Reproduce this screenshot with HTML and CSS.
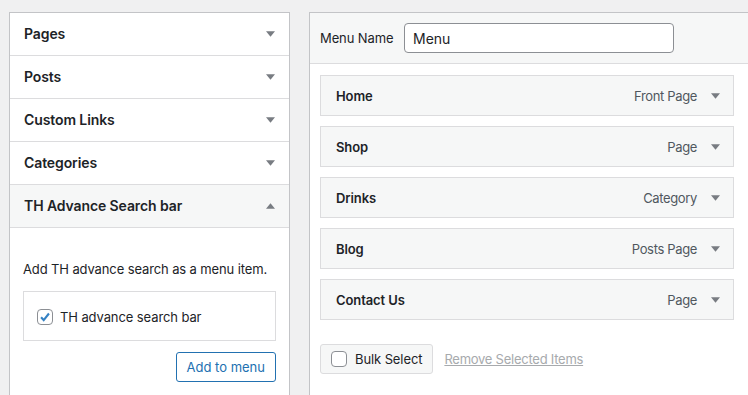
FILE: index.html
```html
<!DOCTYPE html>
<html lang="en">
<head>
    <meta charset="UTF-8">
    <title>Menus</title>
    <link rel="stylesheet" href="styles.css">
</head>
<body>
    <div class="wrap">
        <div class="sidebar">
            <div class="section">
                <h3>Pages</h3>
                <svg class="arrow" viewBox="0 0 10 6"><path d="M0 0h10L5 6z"/></svg>
            </div>
            <div class="section">
                <h3>Posts</h3>
                <svg class="arrow" viewBox="0 0 10 6"><path d="M0 0h10L5 6z"/></svg>
            </div>
            <div class="section">
                <h3>Custom Links</h3>
                <svg class="arrow" viewBox="0 0 10 6"><path d="M0 0h10L5 6z"/></svg>
            </div>
            <div class="section">
                <h3>Categories</h3>
                <svg class="arrow" viewBox="0 0 10 6"><path d="M0 0h10L5 6z"/></svg>
            </div>
            <div class="section open">
                <h3>TH Advance Search bar</h3>
                <svg class="arrow" viewBox="0 0 10 6"><path d="M0 6h10L5 0z"/></svg>
            </div>
            <div class="section-body">
                <p class="hint">Add TH advance search as a menu item.</p>
                <div class="checklist">
                    <label class="check-row">
                        <span class="checkbox checked">
                            <svg viewBox="0 0 16 16"><path d="M3.5 8.3l3 3.2 6-7.5" /></svg>
                        </span>
                        TH advance search bar
                    </label>
                </div>
                <div class="actions">
                    <button class="btn-outline">Add to menu</button>
                </div>
            </div>
        </div>

        <div class="menu-panel">
            <div class="menu-header">
                <label class="menu-label">Menu Name</label>
                <input class="menu-input" type="text" value="Menu">
            </div>
            <div class="menu-body">
                <ul class="menu-items">
                    <li class="menu-item">
                        <span class="item-title">Home</span>
                        <span class="item-type">Front Page</span>
                        <svg class="arrow" viewBox="0 0 10 6"><path d="M0 0h10L5 6z"/></svg>
                    </li>
                    <li class="menu-item">
                        <span class="item-title">Shop</span>
                        <span class="item-type">Page</span>
                        <svg class="arrow" viewBox="0 0 10 6"><path d="M0 0h10L5 6z"/></svg>
                    </li>
                    <li class="menu-item">
                        <span class="item-title">Drinks</span>
                        <span class="item-type">Category</span>
                        <svg class="arrow" viewBox="0 0 10 6"><path d="M0 0h10L5 6z"/></svg>
                    </li>
                    <li class="menu-item">
                        <span class="item-title">Blog</span>
                        <span class="item-type">Posts Page</span>
                        <svg class="arrow" viewBox="0 0 10 6"><path d="M0 0h10L5 6z"/></svg>
                    </li>
                    <li class="menu-item">
                        <span class="item-title">Contact Us</span>
                        <span class="item-type">Page</span>
                        <svg class="arrow" viewBox="0 0 10 6"><path d="M0 0h10L5 6z"/></svg>
                    </li>
                </ul>
                <div class="bulk-row">
                    <label class="bulk-btn">
                        <span class="checkbox"></span>
                        Bulk Select
                    </label>
                    <a class="remove-link">Remove Selected Items</a>
                </div>
            </div>
        </div>
    </div>
</body>
</html>
```
FILE: styles.css
```css
:root {
    --text: #1d2327;
    --muted: #50575e;
    --border: #c3c4c7;
    --line: #dcdcde;
    --bg: #f0f0f1;
    --panel-alt: #f6f7f7;
    --blue: #2271b1;
}

* {
    box-sizing: border-box;
    margin: 0;
    padding: 0;
}

body {
    font-family: Inter, "Noto Sans", sans-serif;
    font-size: 13px;
    color: var(--text);
    background: var(--bg);
    height: 395px;
    overflow: hidden;
}

.wrap {
    display: flex;
    align-items: flex-start;
    gap: 19px;
    padding: 12px 0 0 9px;
}

/* left accordion */
.sidebar {
    flex: 0 0 281px;
    height: 400px;
    background: #fff;
    border: 1px solid var(--border);
    border-bottom: none;
}

.section {
    display: flex;
    align-items: center;
    justify-content: space-between;
    height: 43px;
    padding: 0 14px 1px 14px;
    border-bottom: 1px solid var(--line);
}

.section.open {
    background: var(--panel-alt);
}

.section h3 {
    font-size: 14px;
    font-weight: 600;
    letter-spacing: -0.1px;
}

.arrow {
    width: 9px;
    height: 6px;
    fill: #787c82;
}

.section-body {
    padding: 33px 13px 0 13px;
}

.hint {
    font-size: 13px;
    margin-bottom: 14px;
    letter-spacing: -0.12px;
}

.checklist {
    border: 1px solid var(--line);
    height: 50px;
    display: flex;
    align-items: center;
    padding: 1px 13px 0;
}

.check-row {
    display: flex;
    align-items: center;
    gap: 7px;
    font-size: 13px;
    letter-spacing: -0.1px;
}

.checkbox {
    display: inline-block;
    width: 16px;
    height: 16px;
    border: 1px solid #8c8f94;
    border-radius: 4px;
    background: #fff;
}

.checkbox svg {
    display: block;
    width: 14px;
    height: 14px;
    fill: none;
    stroke: #3582c4;
    stroke-width: 2.4;
}

.actions {
    display: flex;
    justify-content: flex-end;
    margin-top: 11px;
}

.btn-outline {
    font-family: inherit;
    font-size: 13px;
    color: var(--blue);
    background: #fff;
    border: 1px solid var(--blue);
    border-radius: 3px;
    height: 30px;
    padding: 0 10px;
}

/* right menu panel */
.menu-panel {
    flex: 0 0 460px;
    height: 400px;
    background: #fff;
    border: 1px solid var(--border);
    border-bottom: none;
}

.menu-header {
    display: flex;
    align-items: center;
    height: 51px;
    padding: 0 10px;
    background: var(--panel-alt);
    border-bottom: 1px solid var(--line);
}

.menu-label {
    width: 84px;
    font-size: 13px;
    color: var(--text);
    letter-spacing: -0.1px;
}

.menu-input {
    width: 270px;
    height: 30px;
    padding: 0 8px;
    font-family: inherit;
    font-size: 14px;
    color: var(--text);
    border: 1px solid #8c8f94;
    border-radius: 4px;
    outline: none;
}

.menu-body {
    padding: 11px 10px 0 10px;
}

.menu-items {
    list-style: none;
    width: 414px;
    display: grid;
    gap: 10px;
}

.menu-item {
    display: flex;
    align-items: center;
    height: 41px;
    padding: 0 13px 0 15px;
    background: var(--panel-alt);
    border: 1px solid var(--line);
}

.item-title {
    flex: 1;
    font-weight: 600;
    font-size: 13px;
    letter-spacing: -0.1px;
}

.item-type {
    color: var(--muted);
    font-size: 13px;
    margin-right: 14px;
    letter-spacing: -0.35px;
}

.bulk-row {
    display: flex;
    align-items: center;
    gap: 11px;
    margin-top: 24px;
}

.bulk-btn {
    display: flex;
    align-items: center;
    gap: 8px;
    height: 30px;
    padding: 0 10px;
    background: var(--panel-alt);
    border: 1px solid var(--line);
    border-radius: 3px;
    font-size: 13px;
    letter-spacing: -0.1px;
}

.remove-link {
    color: #a7aaad;
    text-decoration: underline;
    font-size: 13px;
    letter-spacing: -0.25px;
}
```
